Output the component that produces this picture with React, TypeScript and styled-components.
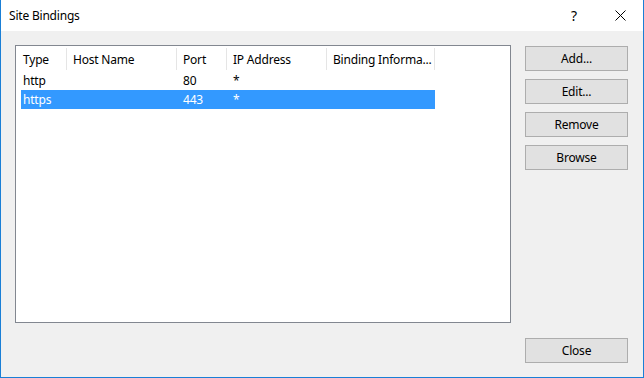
import React from "react"
import styled, { createGlobalStyle } from "styled-components"

const GlobalStyle = createGlobalStyle`
    html, body {
        margin: 0;
        padding: 0;
        background: #ffffff;
    }
    body {
        font-family: "Noto Sans", "Segoe UI", sans-serif;
        font-size: 12px;
        letter-spacing: -0.2px;
        color: #000000;
    }
`;

const Window = styled.div`
    width: 644px;
    height: 378px;
    box-sizing: border-box;
    border: 1px solid #1a7fd6;
    border-top: none;
    display: flex;
    flex-direction: column;
    background: #f0f0f0;
`;

const TitleBar = styled.div`
    height: 31px;
    flex: none;
    background: #ffffff;
    display: flex;
    align-items: center;
    padding-left: 8px;
`;

const Title = styled.div`
    flex: 1;
    line-height: 31px;
    padding-bottom: 1px;
`;

const CaptionButton = styled.div`
    width: 46px;
    height: 31px;
    display: flex;
    align-items: center;
    justify-content: center;
    font-size: 14px;
`;

const Body = styled.div`
    flex: 1;
    display: flex;
    gap: 14px;
    padding: 14px 15px 14px 14px;
`;

const ListBox = styled.div`
    width: 496px;
    height: 278px;
    box-sizing: border-box;
    border: 1px solid #828790;
    background: #ffffff;
    flex: none;
`;

const HeaderRow = styled.div`
    display: grid;
    grid-template-columns: 51px 110px 50px 100px 108px;
    height: 25px;
`;

const HeaderCell = styled.div<{ $first?: boolean }>`
    border-right: 1px solid #e5e5e5;
    margin: 2px 0 1px;
    padding-left: ${(p) => (p.$first ? "7px" : "6px")};
    display: flex;
    align-items: center;
    white-space: nowrap;
    overflow: hidden;
`;

const Row = styled.div<{ $selected?: boolean }>`
    display: grid;
    grid-template-columns: 46px 110px 50px 100px 108px;
    width: 414px;
    margin-left: 5px;
    height: 19px;
    align-items: center;
    background: ${(p) => (p.$selected ? "#3399ff" : "transparent")};
    color: ${(p) => (p.$selected ? "#ffffff" : "#000000")};
`;

const Cell = styled.div<{ $first?: boolean }>`
    padding-left: ${(p) => (p.$first ? "2px" : "6px")};
    white-space: nowrap;
`;

const ButtonColumn = styled.div`
    display: flex;
    flex-direction: column;
    gap: 8px;
    padding-top: 1px;
    width: 103px;
`;

const Button = styled.button`
    height: 25px;
    box-sizing: border-box;
    width: 100%;
    background: #e1e1e1;
    border: 1px solid #adadad;
    font-family: inherit;
    font-size: 12px;
    letter-spacing: inherit;
    color: #000000;
    padding: 0;
    margin: 0;
`;

const CloseButton = styled(Button)`
    margin-top: auto;
`;

const bindings = [
    { type: "http", host: "", port: "80", ip: "*", info: "" },
    { type: "https", host: "", port: "443", ip: "*", info: "" },
];

const CloseIcon = () => (
    <svg width="11" height="11" viewBox="0 0 11 11">
        <path d="M0.5 0.5 L10.5 10.5 M10.5 0.5 L0.5 10.5" stroke="#000" strokeWidth="1" />
    </svg>
)

export default function App() {
    return (
        <>
            <GlobalStyle />
            <Window>
                <TitleBar>
                    <Title>Site Bindings</Title>
                    <CaptionButton>?</CaptionButton>
                    <CaptionButton><CloseIcon /></CaptionButton>
                </TitleBar>
                <Body>
                    <ListBox>
                        <HeaderRow>
                            <HeaderCell $first>Type</HeaderCell>
                            <HeaderCell>Host Name</HeaderCell>
                            <HeaderCell>Port</HeaderCell>
                            <HeaderCell>IP Address</HeaderCell>
                            <HeaderCell>Binding Informa...</HeaderCell>
                        </HeaderRow>
                        {bindings.map((b, i) => (
                            <Row key={b.type} $selected={i === 1}>
                                <Cell $first>{b.type}</Cell>
                                <Cell>{b.host}</Cell>
                                <Cell>{b.port}</Cell>
                                <Cell>{b.ip}</Cell>
                                <Cell>{b.info}</Cell>
                            </Row>
                        ))}
                    </ListBox>
                    <ButtonColumn>
                        <Button>Add...</Button>
                        <Button>Edit...</Button>
                        <Button>Remove</Button>
                        <Button>Browse</Button>
                        <CloseButton>Close</CloseButton>
                    </ButtonColumn>
                </Body>
            </Window>
        </>
    )
}
